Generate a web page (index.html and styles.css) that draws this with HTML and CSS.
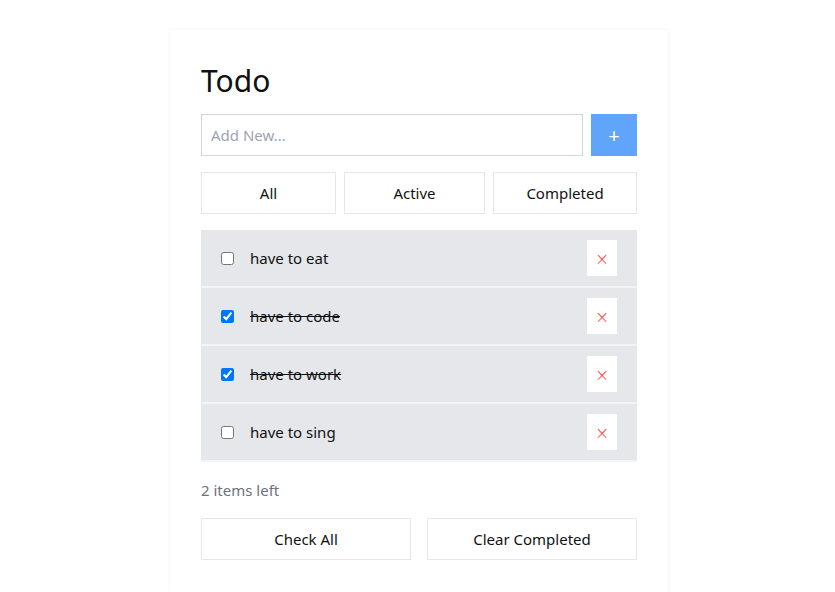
FILE: index.html
```html
<!DOCTYPE html>
<html>
<head>
<meta charset="utf-8">
<link rel="stylesheet" href="styles.css">
</head>
<body>
<div class="card">
  <h1 class="title">Todo</h1>
  <div class="add-row">
    <input class="add-input" type="text" placeholder="Add New...">
    <button class="add-btn">+</button>
  </div>
  <div class="filters">
    <button class="btn">All</button>
    <button class="btn">Active</button>
    <button class="btn">Completed</button>
  </div>
  <ul class="list">
    <li class="item"><input type="checkbox" class="check"><span class="label">have to eat</span><button class="del">×</button></li>
    <li class="item"><input type="checkbox" class="check" checked><span class="label done">have to code</span><button class="del">×</button></li>
    <li class="item"><input type="checkbox" class="check" checked><span class="label done">have to work</span><button class="del">×</button></li>
    <li class="item"><input type="checkbox" class="check"><span class="label">have to sing</span><button class="del">×</button></li>
  </ul>
  <div class="left">2 items left</div>
  <div class="actions">
    <button class="btn">Check All</button>
    <button class="btn">Clear Completed</button>
  </div>
</div>
</body>
</html>
```
FILE: styles.css
```css
html, body {
  margin: 0;
  padding: 0;
  background: #fff;
  font-family: "Noto Sans", "Open Sans", sans-serif;
  color: #111;
}
.card {
  box-sizing: border-box;
  width: 498px;
  height: 562px;
  margin: 30px 0 0 170px;
  padding: 30px 31px 0;
  background: #fff;
  box-shadow: 0 0 4px rgba(0,0,0,0.06);
}
.title {
  margin: 0 0 12px;
  font-size: 30px;
  font-weight: 400;
  line-height: 42px;
}
.add-row {
  display: flex;
  gap: 8px;
  margin-bottom: 16px;
}
.add-input {
  flex: 1;
  height: 42px;
  box-sizing: border-box;
  border: 1px solid #d1d5db;
  padding: 0 9px;
  font-family: inherit;
  font-size: 15px;
  outline: none;
}
.add-input::placeholder { color: #9ca3af; }
.add-btn {
  width: 46px;
  height: 42px;
  border: none;
  background: #60a5fa;
  color: #fff;
  font-size: 20px;
  font-family: inherit;
  padding: 0;
}
.filters {
  display: grid;
  grid-template-columns: 135fr 141fr 144fr;
  gap: 8px;
  margin-bottom: 16px;
}
.btn {
  height: 42px;
  background: #fff;
  border: 1px solid #e5e7eb;
  font-family: inherit;
  font-size: 15px;
  color: #111;
  padding: 0;
}
.list {
  list-style: none;
  margin: 0;
  padding: 0;
}
.item {
  display: flex;
  align-items: center;
  height: 56px;
  padding: 0 20px;
  background: #e5e7eb;
  border-bottom: 2px solid #f3f4f6;
}
.check {
  margin: 0;
  width: 13px;
  height: 13px;
}
.label {
  flex: 1;
  margin-left: 16px;
  font-size: 15px;
}
.label.done { text-decoration: line-through; }
.del {
  width: 30px;
  height: 36px;
  background: #fff;
  border: none;
  color: #ef4444;
  font-size: 17px;
  padding: 2px 0 0;
  font-family: "DejaVu Sans", sans-serif;
  font-weight: 300;
}
.left {
  margin-top: 17px;
  font-size: 15px;
  color: #6b7280;
  line-height: 22px;
}
.actions {
  display: grid;
  grid-template-columns: 1fr 1fr;
  gap: 16px;
  margin-top: 17px;
}
```
